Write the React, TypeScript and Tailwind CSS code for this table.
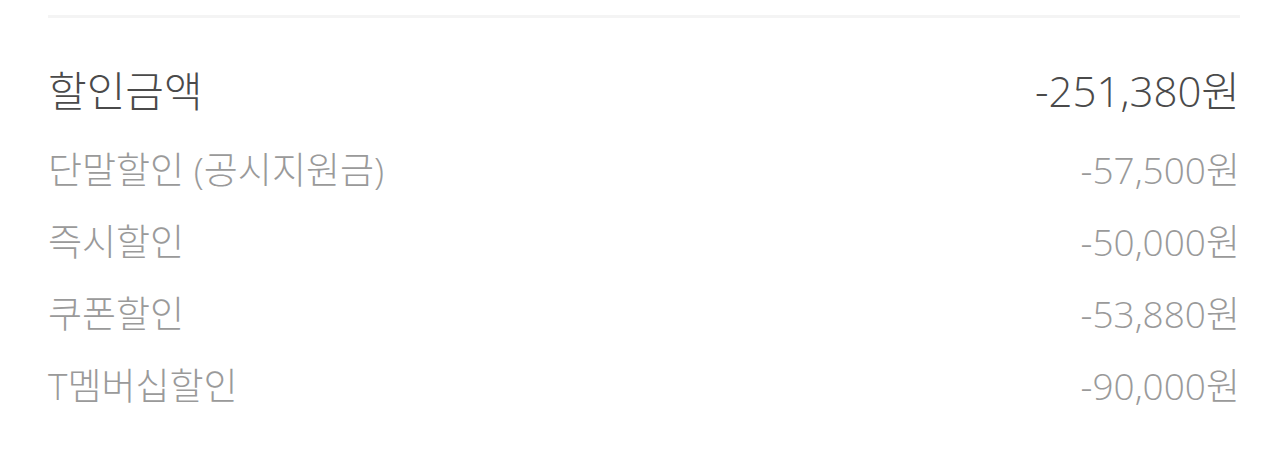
import React from "react";

const rows = [
  { label: "단말할인 (공시지원금)", value: "-57,500원" },
  { label: "즉시할인", value: "-50,000원" },
  { label: "쿠폰할인", value: "-53,880원" },
  { label: "T멤버십할인", value: "-90,000원" },
];

export default function App() {
  return (
    <div
      className="w-[1284px] h-[460px] bg-white pl-[48px] pr-[44px] pt-[15px] font-light"
      style={{ fontFamily: '"Open Sans", "Noto Sans CJK KR", sans-serif' }}
    >
      <div className="h-[3px] bg-[#f4f4f4]" />
      <div className="flex items-center justify-between h-[72px] mt-[36px] text-[42px] text-[#4a4a4a]">
        <span>할인금액</span>
        <span>-251,380원</span>
      </div>
      <div className="flex flex-col mt-[8px]">
        {rows.map((r) => (
          <div
            key={r.label}
            className="flex items-center justify-between h-[72px] text-[37px] text-[#9a9a9a]"
          >
            <span>{r.label}</span>
            <span>{r.value}</span>
          </div>
        ))}
      </div>
    </div>
  );
}
